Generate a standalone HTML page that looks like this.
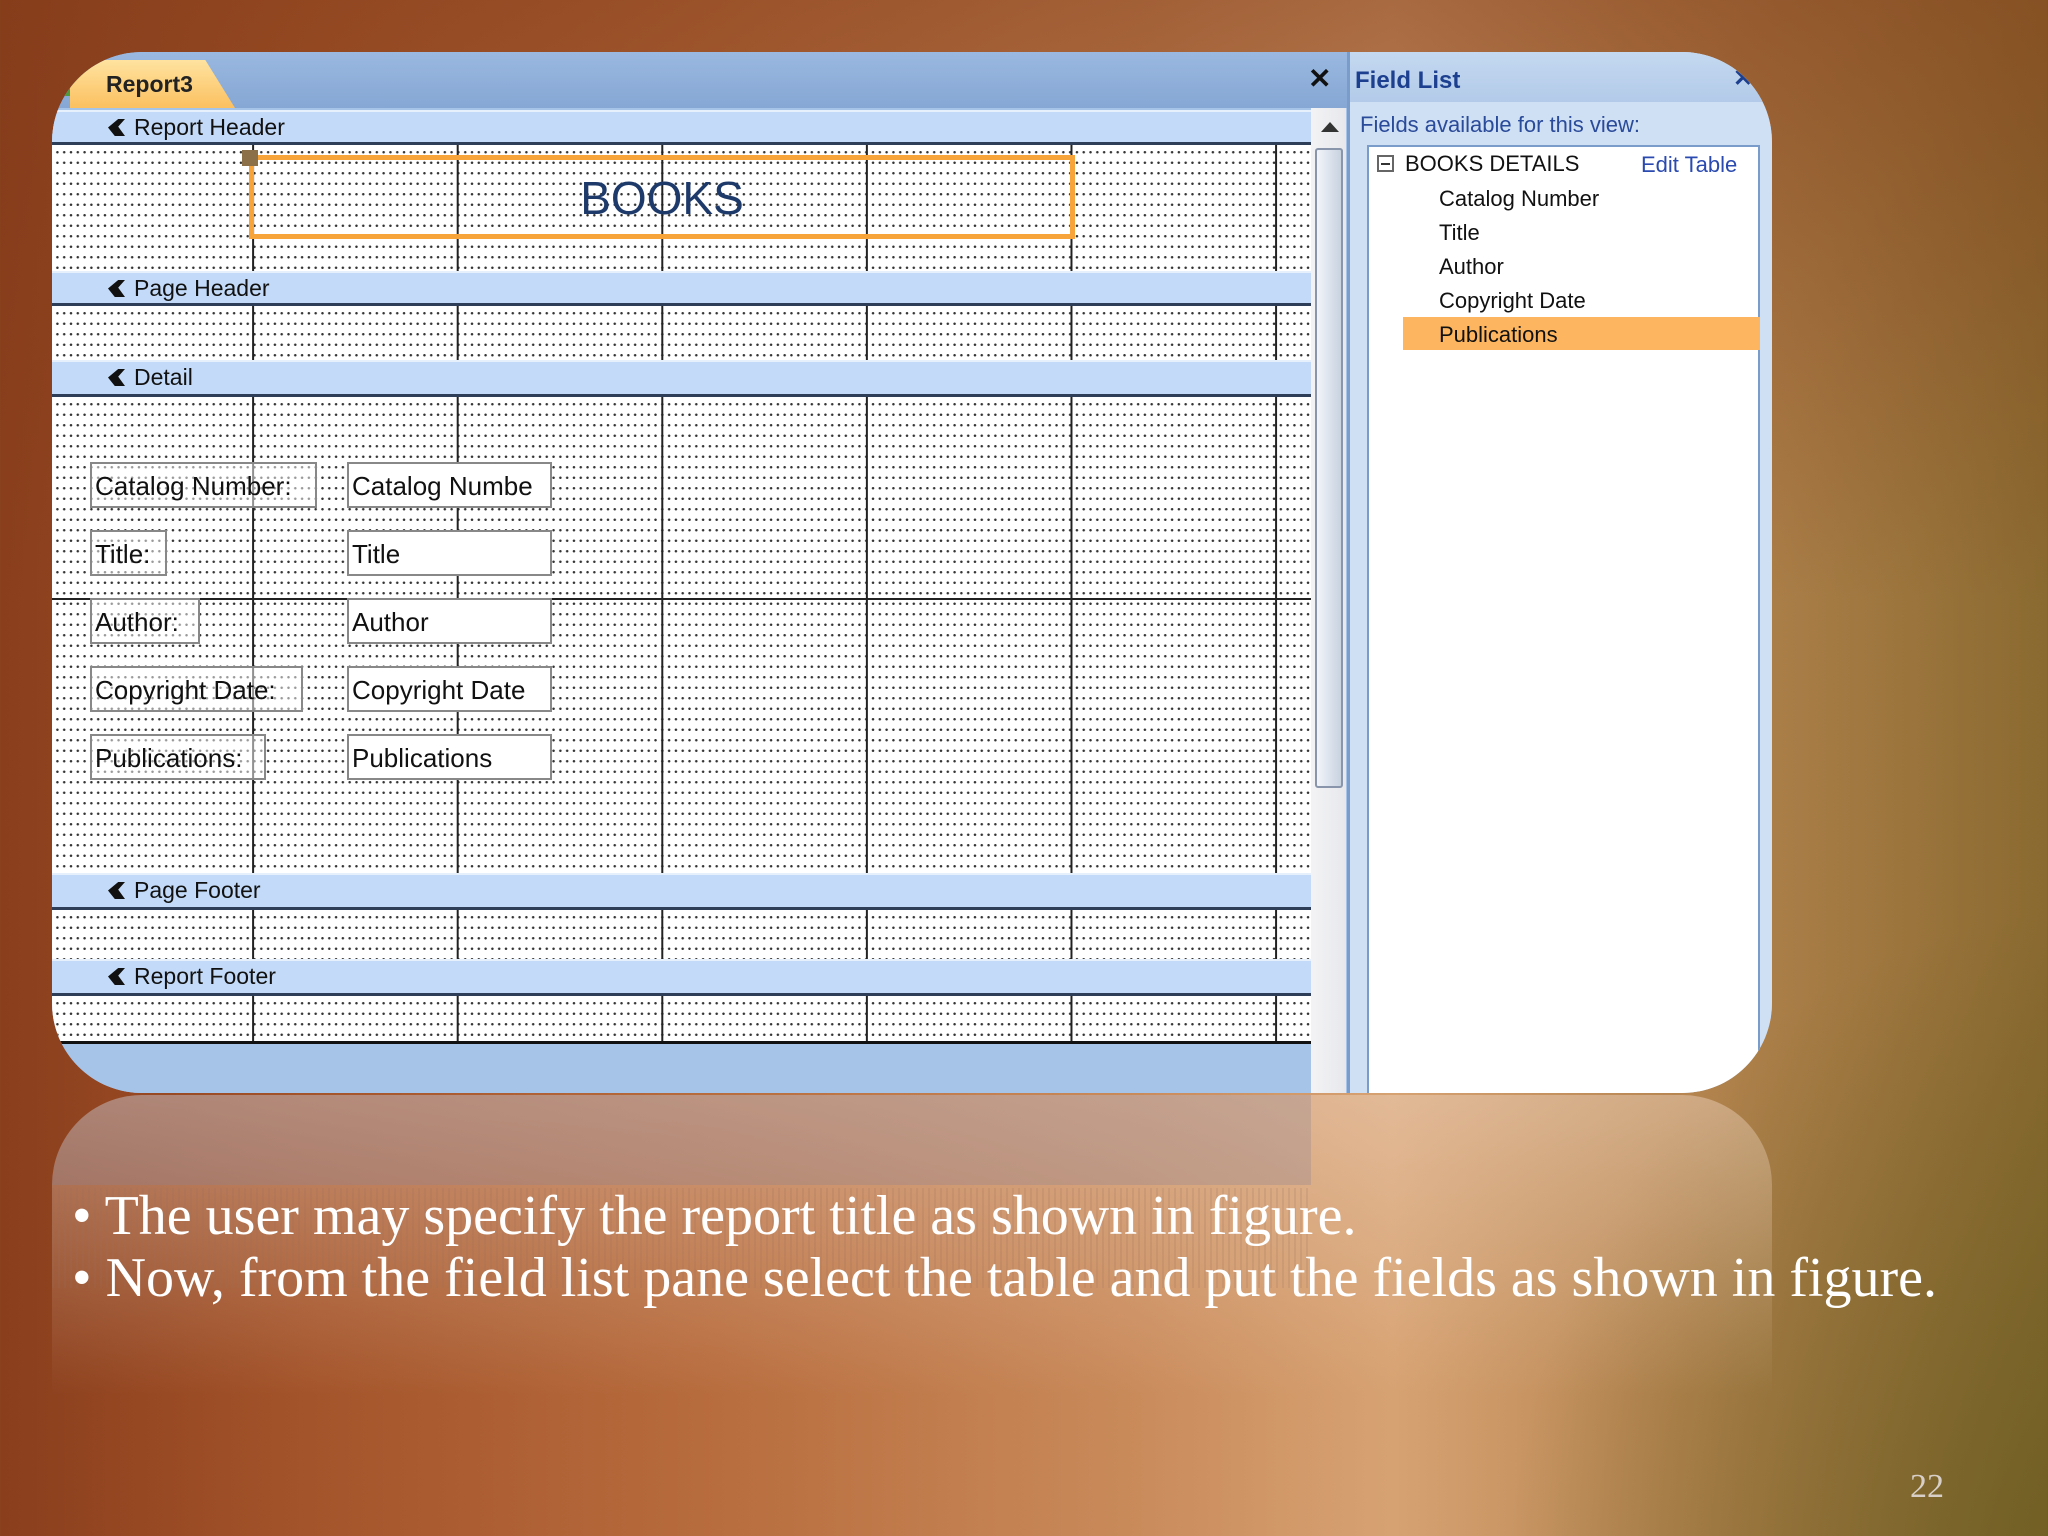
<!DOCTYPE html>
<html><head><meta charset="utf-8"><style>
*{margin:0;padding:0;box-sizing:border-box}
html{width:2048px;height:1536px;overflow:hidden}
body{width:2048px;height:1536px;overflow:hidden;position:relative;font-family:"Liberation Sans",sans-serif;
background:linear-gradient(90deg,#8a3e1c 0%,#a4542a 15%,#b86d3e 35%,#c98a5a 55%,#d7a272 68%,#b68550 82%,#8a6a30 100%);}
.topfade{position:absolute;left:0;top:0;width:2048px;height:600px;background:linear-gradient(180deg,rgba(130,60,25,0.55),rgba(130,60,25,0));}
.olive{position:absolute;left:1500px;top:900px;width:600px;height:700px;background:radial-gradient(ellipse at 100% 100%,rgba(100,90,30,0.75),rgba(100,90,30,0) 70%);}
.shot{position:absolute;left:52px;top:52px;width:1720px;height:1041px;border-radius:90px;overflow:hidden;background:#a6c3e8;}
.tabbar{position:absolute;left:0;top:0;width:1296px;height:56px;background:linear-gradient(#9ab8e0,#86a7d4);}
.tab{position:absolute;left:18px;top:8px;width:165px;height:48px;background:linear-gradient(#ffe3a0,#fbc060);border-radius:8px 0 0 0;clip-path:polygon(0 0,82% 0,100% 100%,0 100%);font-size:23px;font-weight:bold;color:#222;padding:11px 0 0 36px;}
.tabicon{position:absolute;left:0;top:14px;width:38px;height:30px;background:#4d9a3e;}
.close1{position:absolute;left:1256px;top:10px;font-size:28px;font-weight:bold;color:#111}
.form{position:absolute;left:0;top:56px;width:1259px;height:993px;background:#a6c3e8;}
.band{position:absolute;left:0;width:1259px;background:#c3dbf8;border-bottom:3px solid #2e3e58;border-top:2px solid #e6f0fc;font-size:23px;color:#111;padding:2px 0 0 58px;}
.band:before{content:"";position:absolute;left:56px;top:7px;width:17px;height:17px;background:#111;clip-path:polygon(60% 0,100% 0,60% 45%,100% 100%,40% 100%,0 50%);}
.band span{margin-left:24px}
.grid{position:absolute;left:0;width:1259px;background-color:#fff;
background-image:linear-gradient(90deg,transparent 200px,#222 200px,#222 202px,transparent 202px),radial-gradient(circle,#333 1px,transparent 1.5px);
background-size:204.6px 100%,6.8px 10.5px;background-position:0 0,2px 2px;}
.hl{position:absolute;left:0;width:1259px;height:2px;background:#222}
.lbl{position:absolute;height:46px;border:2px solid #888;background:rgba(255,255,255,0.5);font-size:26px;color:#111;padding:7px 0 0 3px;white-space:nowrap;overflow:hidden}
.tb{background:#fff}
.scroll{position:absolute;left:1259px;top:56px;width:35px;height:985px;background:linear-gradient(90deg,#f3f3f5,#e7e8ec);}
.thumb{position:absolute;left:4px;top:40px;width:28px;height:640px;border:2px solid #8895aa;border-radius:3px;background:linear-gradient(90deg,#f2f5fa,#c8d2e0);}
.fl{position:absolute;left:1295px;top:0;width:425px;height:1041px;background:#cfe0f4;border-left:3px solid #7a9ccb;}
.fltitle{position:absolute;left:0;top:0;width:425px;height:50px;background:linear-gradient(#c4d8f0,#b3cbe9);font-size:24px;font-weight:bold;color:#1d3f8f;padding:15px 0 0 5px}
.flsub{position:absolute;left:10px;top:60px;font-size:22px;color:#2a4a9a}
.flbox{position:absolute;left:17px;top:93px;width:393px;height:960px;background:#fff;border:2px solid #7a9ccb;}
.fi{position:absolute;font-size:22px;color:#111;white-space:nowrap}
.bul{position:absolute;left:72px;font-family:"Liberation Serif",serif;font-size:56px;color:#fff;white-space:nowrap}
.refl{position:absolute;left:52px;top:1095px;width:1720px;height:300px;border-radius:90px 90px 0 0;overflow:hidden;
background:linear-gradient(180deg,rgba(240,215,195,0.45),rgba(240,215,195,0.2) 55%,rgba(240,215,195,0) 100%);}
.refl .a{position:absolute;left:0;top:0;width:1259px;height:90px;background:rgba(140,130,150,0.3)}
.refl .b{position:absolute;left:0;top:93px;width:1259px;height:100px;background:repeating-linear-gradient(90deg,rgba(150,110,90,0.18) 0 2px,transparent 2px 6px);}
</style></head><body>
<div class="topfade"></div><div class="olive"></div>
<div class="refl"><div class="a"></div><div class="b"></div></div>
<div class="shot">
 <div class="tabbar"><div class="tabicon"></div><div class="tab">Report3</div><div class="close1">✕</div></div>
 <div class="form">
  <div class="band" style="top:2px;height:35px"><span>Report Header</span></div>
  <div class="grid" style="top:37px;height:126px"></div>
  <div style="position:absolute;left:197px;top:47px;width:826px;height:84px;border:5px solid #f7a53a"></div>
  <div style="position:absolute;left:190px;top:42px;width:16px;height:16px;background:#8b7048"></div>
  <div style="position:absolute;left:197px;top:63px;width:826px;text-align:center;font-size:46px;color:#1d3a6a">BOOKS</div>
  <div class="band" style="top:163px;height:35px"><span>Page Header</span></div>
  <div class="grid" style="top:198px;height:54px"></div>
  <div class="band" style="top:252px;height:37px"><span>Detail</span></div>
  <div class="grid" style="top:289px;height:476px"></div>
  <div class="hl" style="top:490px"></div>
  <div class="lbl" style="left:38px;top:354px;width:227px">Catalog Number:</div>
  <div class="lbl tb" style="left:295px;top:354px;width:205px">Catalog Numbe</div>
  <div class="lbl" style="left:38px;top:422px;width:77px">Title:</div>
  <div class="lbl tb" style="left:295px;top:422px;width:205px">Title</div>
  <div class="lbl" style="left:38px;top:490px;width:110px">Author:</div>
  <div class="lbl tb" style="left:295px;top:490px;width:205px">Author</div>
  <div class="lbl" style="left:38px;top:558px;width:213px">Copyright Date:</div>
  <div class="lbl tb" style="left:295px;top:558px;width:205px">Copyright Date</div>
  <div class="lbl" style="left:38px;top:626px;width:176px">Publications:</div>
  <div class="lbl tb" style="left:295px;top:626px;width:205px">Publications</div>
  <div class="band" style="top:765px;height:37px"><span>Page Footer</span></div>
  <div class="grid" style="top:802px;height:49px"></div>
  <div class="band" style="top:851px;height:37px"><span>Report Footer</span></div>
  <div class="grid" style="top:888px;height:48px;border-bottom:3px solid #111"></div>
 </div>
 <div class="scroll"><div style="position:absolute;left:10px;top:14px;width:0;height:0;border-left:9px solid transparent;border-right:9px solid transparent;border-bottom:10px solid #333"></div><div class="thumb"></div></div>
 <div class="fl">
  <div class="fltitle">Field List<span style="position:absolute;left:383px;top:12px;color:#1d3f8f">✕</span></div>
  <div class="flsub">Fields available for this view:</div>
  <div class="flbox">
   <div style="position:absolute;left:8px;top:8px;width:17px;height:17px;border:2px solid #666;"><div style="position:absolute;left:2px;top:6px;width:9px;height:2px;background:#333"></div></div>
   <div class="fi" style="left:36px;top:4px">BOOKS DETAILS</div>
   <div class="fi" style="left:272px;top:5px;color:#2a4ab0">Edit Table</div>
   <div class="fi" style="left:70px;top:39px">Catalog Number</div>
   <div class="fi" style="left:70px;top:73px">Title</div>
   <div class="fi" style="left:70px;top:107px">Author</div>
   <div class="fi" style="left:70px;top:141px">Copyright Date</div>
   <div style="position:absolute;left:34px;top:170px;width:357px;height:33px;background:#fdb65f"></div>
   <div class="fi" style="left:70px;top:175px">Publications</div>
  </div>
 </div>
</div>
<div class="bul" style="top:1184px">• The user may specify the report title as shown in figure.</div>
<div class="bul" style="top:1246px">• Now, from the field list pane select the table and put the fields as shown in figure.</div>
<div style="position:absolute;left:1910px;top:1468px;font-family:'Liberation Serif',serif;font-size:34px;color:#d8d0c8">22</div>
</body></html>
